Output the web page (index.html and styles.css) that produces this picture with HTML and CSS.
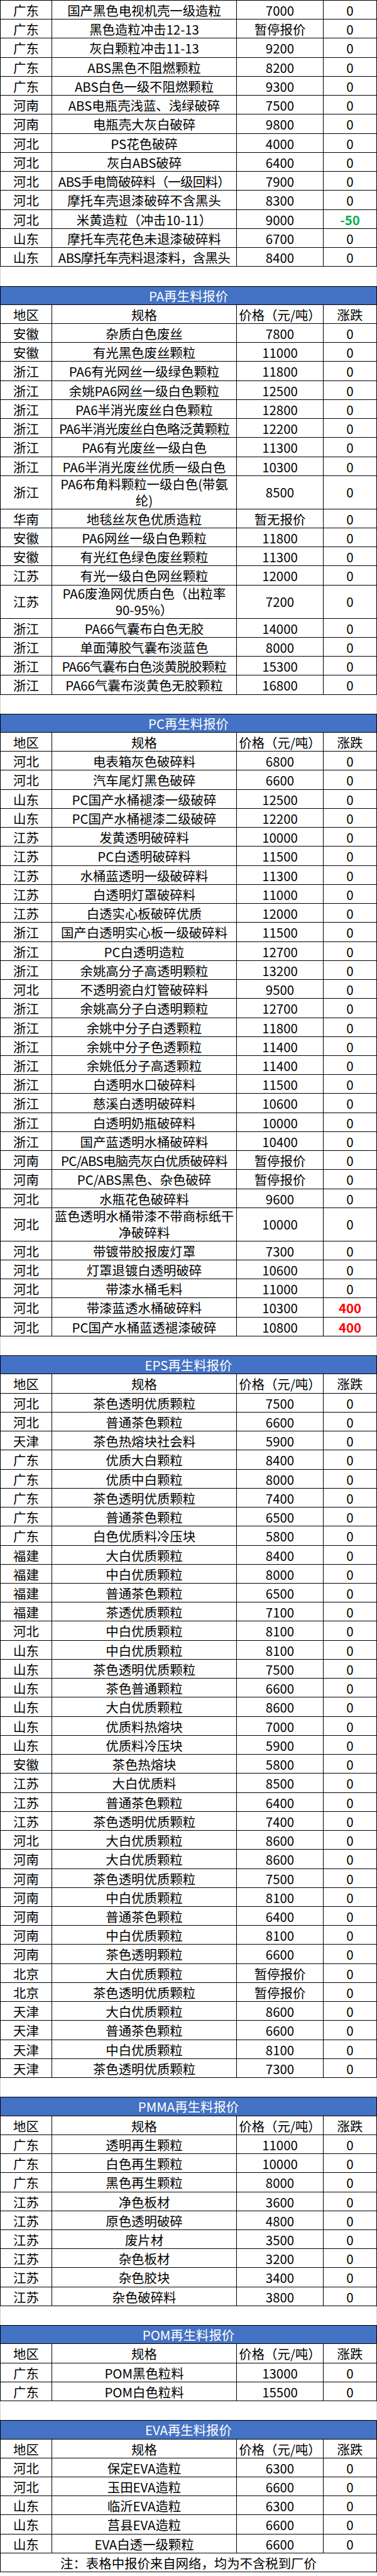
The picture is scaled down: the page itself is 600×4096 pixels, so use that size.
FILE: index.html
```html
<!DOCTYPE html>
<html lang="zh-CN">
<head>
<meta charset="utf-8">
<title>再生料报价</title>
<link rel="stylesheet" href="styles.css">
</head>
<body>
<div class="sheet">

  <section class="block first">
    <div class="row"><div class="c">广东</div><div class="c">国产黑色电视机壳一级造粒</div><div class="c">7000</div><div class="c">0</div></div>
    <div class="row"><div class="c">广东</div><div class="c">黑色造粒冲击12-13</div><div class="c">暂停报价</div><div class="c">0</div></div>
    <div class="row"><div class="c">广东</div><div class="c">灰白颗粒冲击11-13</div><div class="c">9200</div><div class="c">0</div></div>
    <div class="row"><div class="c">广东</div><div class="c">ABS黑色不阻燃颗粒</div><div class="c">8200</div><div class="c">0</div></div>
    <div class="row"><div class="c">广东</div><div class="c">ABS白色一级不阻燃颗粒</div><div class="c">9300</div><div class="c">0</div></div>
    <div class="row"><div class="c">河南</div><div class="c">ABS电瓶壳浅蓝、浅绿破碎</div><div class="c">7500</div><div class="c">0</div></div>
    <div class="row"><div class="c">河南</div><div class="c">电瓶壳大灰白破碎</div><div class="c">9800</div><div class="c">0</div></div>
    <div class="row"><div class="c">河北</div><div class="c">PS花色破碎</div><div class="c">4000</div><div class="c">0</div></div>
    <div class="row"><div class="c">河北</div><div class="c">灰白ABS破碎</div><div class="c">6400</div><div class="c">0</div></div>
    <div class="row"><div class="c">河北</div><div class="c tight">ABS手电筒破碎料（一级回料）</div><div class="c">7900</div><div class="c">0</div></div>
    <div class="row"><div class="c">河北</div><div class="c">摩托车壳退漆破碎不含黑头</div><div class="c">8300</div><div class="c">0</div></div>
    <div class="row"><div class="c">河北</div><div class="c">米黄造粒（冲击10-11）</div><div class="c">9000</div><div class="c down">-50</div></div>
    <div class="row"><div class="c">山东</div><div class="c">摩托车壳花色未退漆破碎料</div><div class="c">6700</div><div class="c">0</div></div>
    <div class="row"><div class="c">山东</div><div class="c tight">ABS摩托车壳料退漆料，含黑头</div><div class="c">8400</div><div class="c">0</div></div>
  </section>

  <div class="gap"></div>

  <section class="block">
    <div class="title">PA再生料报价</div>
    <div class="row"><div class="c">地区</div><div class="c">规格</div><div class="c">价格（元/吨）</div><div class="c">涨跌</div></div>
    <div class="row"><div class="c">安徽</div><div class="c">杂质白色废丝</div><div class="c">7800</div><div class="c">0</div></div>
    <div class="row"><div class="c">安徽</div><div class="c">有光黑色废丝颗粒</div><div class="c">11000</div><div class="c">0</div></div>
    <div class="row"><div class="c">浙江</div><div class="c">PA6有光网丝一级绿色颗粒</div><div class="c">11800</div><div class="c">0</div></div>
    <div class="row"><div class="c">浙江</div><div class="c">余姚PA6网丝一级白色颗粒</div><div class="c">12500</div><div class="c">0</div></div>
    <div class="row"><div class="c">浙江</div><div class="c">PA6半消光废丝白色颗粒</div><div class="c">12800</div><div class="c">0</div></div>
    <div class="row"><div class="c">浙江</div><div class="c tight">PA6半消光废丝白色略泛黄颗粒</div><div class="c">12200</div><div class="c">0</div></div>
    <div class="row"><div class="c">浙江</div><div class="c">PA6有光废丝一级白色</div><div class="c">11300</div><div class="c">0</div></div>
    <div class="row"><div class="c">浙江</div><div class="c">PA6半消光废丝优质一级白色</div><div class="c">10300</div><div class="c">0</div></div>
    <div class="row tall"><div class="c">浙江</div><div class="c">PA6布角料颗粒一级白色(带氨<br>纶)</div><div class="c">8500</div><div class="c">0</div></div>
    <div class="row"><div class="c">华南</div><div class="c">地毯丝灰色优质造粒</div><div class="c">暂无报价</div><div class="c">0</div></div>
    <div class="row"><div class="c">安徽</div><div class="c">PA6网丝一级白色颗粒</div><div class="c">11800</div><div class="c">0</div></div>
    <div class="row"><div class="c">安徽</div><div class="c">有光红色绿色废丝颗粒</div><div class="c">11300</div><div class="c">0</div></div>
    <div class="row"><div class="c">江苏</div><div class="c">有光一级白色网丝颗粒</div><div class="c">12000</div><div class="c">0</div></div>
    <div class="row tall"><div class="c">江苏</div><div class="c">PA6废渔网优质白色（出粒率<br>90-95%）</div><div class="c">7200</div><div class="c">0</div></div>
    <div class="row"><div class="c">浙江</div><div class="c">PA66气囊布白色无胶</div><div class="c">14000</div><div class="c">0</div></div>
    <div class="row"><div class="c">浙江</div><div class="c">单面薄胶气囊布淡蓝色</div><div class="c">8000</div><div class="c">0</div></div>
    <div class="row"><div class="c">浙江</div><div class="c tight">PA66气囊布白色淡黄脱胶颗粒</div><div class="c">15300</div><div class="c">0</div></div>
    <div class="row"><div class="c">浙江</div><div class="c">PA66气囊布淡黄色无胶颗粒</div><div class="c">16800</div><div class="c">0</div></div>
  </section>

  <div class="gap"></div>

  <section class="block">
    <div class="title">PC再生料报价</div>
    <div class="row"><div class="c">地区</div><div class="c">规格</div><div class="c">价格（元/吨）</div><div class="c">涨跌</div></div>
    <div class="row"><div class="c">河北</div><div class="c">电表箱灰色破碎料</div><div class="c">6800</div><div class="c">0</div></div>
    <div class="row"><div class="c">河北</div><div class="c">汽车尾灯黑色破碎</div><div class="c">6600</div><div class="c">0</div></div>
    <div class="row"><div class="c">山东</div><div class="c">PC国产水桶褪漆一级破碎</div><div class="c">12500</div><div class="c">0</div></div>
    <div class="row"><div class="c">山东</div><div class="c">PC国产水桶褪漆二级破碎</div><div class="c">12200</div><div class="c">0</div></div>
    <div class="row"><div class="c">江苏</div><div class="c">发黄透明破碎料</div><div class="c">10000</div><div class="c">0</div></div>
    <div class="row"><div class="c">江苏</div><div class="c">PC白透明破碎料</div><div class="c">11500</div><div class="c">0</div></div>
    <div class="row"><div class="c">江苏</div><div class="c">水桶蓝透明一级破碎料</div><div class="c">11300</div><div class="c">0</div></div>
    <div class="row"><div class="c">江苏</div><div class="c">白透明灯罩破碎料</div><div class="c">11000</div><div class="c">0</div></div>
    <div class="row"><div class="c">江苏</div><div class="c">白透实心板破碎优质</div><div class="c">12000</div><div class="c">0</div></div>
    <div class="row"><div class="c">浙江</div><div class="c">国产白透明实心板一级破碎料</div><div class="c">11500</div><div class="c">0</div></div>
    <div class="row"><div class="c">浙江</div><div class="c">PC白透明造粒</div><div class="c">12700</div><div class="c">0</div></div>
    <div class="row"><div class="c">浙江</div><div class="c">余姚高分子高透明颗粒</div><div class="c">13200</div><div class="c">0</div></div>
    <div class="row"><div class="c">河北</div><div class="c">不透明瓷白灯管破碎料</div><div class="c">9500</div><div class="c">0</div></div>
    <div class="row"><div class="c">浙江</div><div class="c">余姚高分子白透明颗粒</div><div class="c">12700</div><div class="c">0</div></div>
    <div class="row"><div class="c">浙江</div><div class="c">余姚中分子白透颗粒</div><div class="c">11800</div><div class="c">0</div></div>
    <div class="row"><div class="c">浙江</div><div class="c">余姚中分子色透颗粒</div><div class="c">11400</div><div class="c">0</div></div>
    <div class="row"><div class="c">浙江</div><div class="c">余姚低分子高透颗粒</div><div class="c">11400</div><div class="c">0</div></div>
    <div class="row"><div class="c">浙江</div><div class="c">白透明水口破碎料</div><div class="c">11500</div><div class="c">0</div></div>
    <div class="row"><div class="c">浙江</div><div class="c">慈溪白透明破碎料</div><div class="c">10600</div><div class="c">0</div></div>
    <div class="row"><div class="c">浙江</div><div class="c">白透明奶瓶破碎料</div><div class="c">10000</div><div class="c">0</div></div>
    <div class="row"><div class="c">浙江</div><div class="c">国产蓝透明水桶破碎料</div><div class="c">10400</div><div class="c">0</div></div>
    <div class="row"><div class="c">河南</div><div class="c tight">PC/ABS电脑壳灰白优质破碎料</div><div class="c">暂停报价</div><div class="c">0</div></div>
    <div class="row"><div class="c">河南</div><div class="c">PC/ABS黑色、杂色破碎</div><div class="c">暂停报价</div><div class="c">0</div></div>
    <div class="row"><div class="c">河北</div><div class="c">水瓶花色破碎料</div><div class="c">9600</div><div class="c">0</div></div>
    <div class="row tall"><div class="c">河北</div><div class="c">蓝色透明水桶带漆不带商标纸干<br>净破碎料</div><div class="c">10000</div><div class="c">0</div></div>
    <div class="row"><div class="c">河北</div><div class="c">带镀带胶报废灯罩</div><div class="c">7300</div><div class="c">0</div></div>
    <div class="row"><div class="c">河北</div><div class="c">灯罩退镀白透明破碎</div><div class="c">10600</div><div class="c">0</div></div>
    <div class="row"><div class="c">河北</div><div class="c">带漆水桶毛料</div><div class="c">11000</div><div class="c">0</div></div>
    <div class="row"><div class="c">河北</div><div class="c">带漆蓝透水桶破碎料</div><div class="c">10300</div><div class="c up">400</div></div>
    <div class="row"><div class="c">河北</div><div class="c">PC国产水桶蓝透褪漆破碎</div><div class="c">10800</div><div class="c up">400</div></div>
  </section>

  <div class="gap"></div>

  <section class="block">
    <div class="title">EPS再生料报价</div>
    <div class="row"><div class="c">地区</div><div class="c">规格</div><div class="c">价格（元/吨）</div><div class="c">涨跌</div></div>
    <div class="row"><div class="c">河北</div><div class="c">茶色透明优质颗粒</div><div class="c">7500</div><div class="c">0</div></div>
    <div class="row"><div class="c">河北</div><div class="c">普通茶色颗粒</div><div class="c">6600</div><div class="c">0</div></div>
    <div class="row"><div class="c">天津</div><div class="c">茶色热熔块社会料</div><div class="c">5900</div><div class="c">0</div></div>
    <div class="row"><div class="c">广东</div><div class="c">优质大白颗粒</div><div class="c">8400</div><div class="c">0</div></div>
    <div class="row"><div class="c">广东</div><div class="c">优质中白颗粒</div><div class="c">8000</div><div class="c">0</div></div>
    <div class="row"><div class="c">广东</div><div class="c">茶色透明优质颗粒</div><div class="c">7400</div><div class="c">0</div></div>
    <div class="row"><div class="c">广东</div><div class="c">普通茶色颗粒</div><div class="c">6500</div><div class="c">0</div></div>
    <div class="row"><div class="c">广东</div><div class="c">白色优质料冷压块</div><div class="c">5800</div><div class="c">0</div></div>
    <div class="row"><div class="c">福建</div><div class="c">大白优质颗粒</div><div class="c">8400</div><div class="c">0</div></div>
    <div class="row"><div class="c">福建</div><div class="c">中白优质颗粒</div><div class="c">8000</div><div class="c">0</div></div>
    <div class="row"><div class="c">福建</div><div class="c">普通茶色颗粒</div><div class="c">6500</div><div class="c">0</div></div>
    <div class="row"><div class="c">福建</div><div class="c">茶透优质颗粒</div><div class="c">7100</div><div class="c">0</div></div>
    <div class="row"><div class="c">河北</div><div class="c">中白优质颗粒</div><div class="c">8100</div><div class="c">0</div></div>
    <div class="row"><div class="c">山东</div><div class="c">中白优质颗粒</div><div class="c">8100</div><div class="c">0</div></div>
    <div class="row"><div class="c">山东</div><div class="c">茶色透明优质颗粒</div><div class="c">7500</div><div class="c">0</div></div>
    <div class="row"><div class="c">山东</div><div class="c">茶色普通颗粒</div><div class="c">6600</div><div class="c">0</div></div>
    <div class="row"><div class="c">山东</div><div class="c">大白优质颗粒</div><div class="c">8600</div><div class="c">0</div></div>
    <div class="row"><div class="c">山东</div><div class="c">优质料热熔块</div><div class="c">7000</div><div class="c">0</div></div>
    <div class="row"><div class="c">山东</div><div class="c">优质料冷压块</div><div class="c">5900</div><div class="c">0</div></div>
    <div class="row"><div class="c">安徽</div><div class="c">茶色热熔块</div><div class="c">5800</div><div class="c">0</div></div>
    <div class="row"><div class="c">江苏</div><div class="c">大白优质料</div><div class="c">8500</div><div class="c">0</div></div>
    <div class="row"><div class="c">江苏</div><div class="c">普通茶色颗粒</div><div class="c">6400</div><div class="c">0</div></div>
    <div class="row"><div class="c">江苏</div><div class="c">茶色透明优质颗粒</div><div class="c">7400</div><div class="c">0</div></div>
    <div class="row"><div class="c">河北</div><div class="c">大白优质颗粒</div><div class="c">8600</div><div class="c">0</div></div>
    <div class="row"><div class="c">河南</div><div class="c">大白优质颗粒</div><div class="c">8600</div><div class="c">0</div></div>
    <div class="row"><div class="c">河南</div><div class="c">茶色透明优质颗粒</div><div class="c">7500</div><div class="c">0</div></div>
    <div class="row"><div class="c">河南</div><div class="c">中白优质颗粒</div><div class="c">8100</div><div class="c">0</div></div>
    <div class="row"><div class="c">河南</div><div class="c">普通茶色颗粒</div><div class="c">6400</div><div class="c">0</div></div>
    <div class="row"><div class="c">河南</div><div class="c">中白优质颗粒</div><div class="c">8100</div><div class="c">0</div></div>
    <div class="row"><div class="c">河南</div><div class="c">茶色透明颗粒</div><div class="c">6600</div><div class="c">0</div></div>
    <div class="row"><div class="c">北京</div><div class="c">大白优质颗粒</div><div class="c">暂停报价</div><div class="c">0</div></div>
    <div class="row"><div class="c">北京</div><div class="c">茶色透明优质颗粒</div><div class="c">暂停报价</div><div class="c">0</div></div>
    <div class="row"><div class="c">天津</div><div class="c">大白优质颗粒</div><div class="c">8600</div><div class="c">0</div></div>
    <div class="row"><div class="c">天津</div><div class="c">普通茶色颗粒</div><div class="c">6600</div><div class="c">0</div></div>
    <div class="row"><div class="c">天津</div><div class="c">中白优质颗粒</div><div class="c">8100</div><div class="c">0</div></div>
    <div class="row"><div class="c">天津</div><div class="c">茶色透明优质颗粒</div><div class="c">7300</div><div class="c">0</div></div>
  </section>

  <div class="gap"></div>

  <section class="block">
    <div class="title">PMMA再生料报价</div>
    <div class="row"><div class="c">地区</div><div class="c">规格</div><div class="c">价格（元/吨）</div><div class="c">涨跌</div></div>
    <div class="row"><div class="c">广东</div><div class="c">透明再生颗粒</div><div class="c">11000</div><div class="c">0</div></div>
    <div class="row"><div class="c">广东</div><div class="c">白色再生颗粒</div><div class="c">10000</div><div class="c">0</div></div>
    <div class="row"><div class="c">广东</div><div class="c">黑色再生颗粒</div><div class="c">8000</div><div class="c">0</div></div>
    <div class="row"><div class="c">江苏</div><div class="c">净色板材</div><div class="c">3600</div><div class="c">0</div></div>
    <div class="row"><div class="c">江苏</div><div class="c">原色透明破碎</div><div class="c">4800</div><div class="c">0</div></div>
    <div class="row"><div class="c">江苏</div><div class="c">废片材</div><div class="c">3500</div><div class="c">0</div></div>
    <div class="row"><div class="c">江苏</div><div class="c">杂色板材</div><div class="c">3200</div><div class="c">0</div></div>
    <div class="row"><div class="c">江苏</div><div class="c">杂色胶块</div><div class="c">3400</div><div class="c">0</div></div>
    <div class="row"><div class="c">江苏</div><div class="c">杂色破碎料</div><div class="c">3800</div><div class="c">0</div></div>
  </section>

  <div class="gap"></div>

  <section class="block">
    <div class="title">POM再生料报价</div>
    <div class="row"><div class="c">地区</div><div class="c">规格</div><div class="c">价格（元/吨）</div><div class="c">涨跌</div></div>
    <div class="row"><div class="c">广东</div><div class="c">POM黑色粒料</div><div class="c">13000</div><div class="c">0</div></div>
    <div class="row"><div class="c">广东</div><div class="c">POM白色粒料</div><div class="c">15500</div><div class="c">0</div></div>
  </section>

  <div class="gap"></div>

  <section class="block">
    <div class="title">EVA再生料报价</div>
    <div class="row"><div class="c">地区</div><div class="c">规格</div><div class="c">价格（元/吨）</div><div class="c">涨跌</div></div>
    <div class="row"><div class="c">河北</div><div class="c">保定EVA造粒</div><div class="c">6300</div><div class="c">0</div></div>
    <div class="row"><div class="c">河北</div><div class="c">玉田EVA造粒</div><div class="c">6600</div><div class="c">0</div></div>
    <div class="row"><div class="c">山东</div><div class="c">临沂EVA造粒</div><div class="c">6300</div><div class="c">0</div></div>
    <div class="row"><div class="c">山东</div><div class="c">莒县EVA造粒</div><div class="c">6600</div><div class="c">0</div></div>
    <div class="row"><div class="c">山东</div><div class="c">EVA白透一级颗粒</div><div class="c">6600</div><div class="c">0</div></div>
    <div class="note">注：表格中报价来自网络，均为不含税到厂价</div>
  </section>

</div>
</body>
</html>
```

FILE: styles.css
```css
html, body {
  margin: 0;
  padding: 0;
  background: #ffffff;
}

body {
  font-family: "Noto Sans CJK SC", "Noto Sans", sans-serif;
  font-size: 20.4px;
  color: #000000;
}

.sheet {
  width: 600px;
}

.block {
  display: flex;
  flex-direction: column;
}

.block.first {
  border-top: 1px solid #000000;
}

.row {
  display: grid;
  grid-template-columns: 82px 294px 138px 1fr;
  height: 30.24px;
  box-sizing: border-box;
  border-left: 1px solid #000000;
  border-right: 1px solid #000000;
  border-bottom: 1px solid #000000;
}

.row.tall {
  height: 52.92px;
  line-height: 25.7px;
}

.c {
  display: flex;
  align-items: center;
  justify-content: center;
  text-align: center;
  white-space: nowrap;
  min-width: 0;
  border-right: 1px solid #000000;
}

.c:last-child {
  border-right: none;
}

.tight {
  letter-spacing: -0.6px;
}

.down {
  color: #00b050;
  font-weight: 700;
}

.up {
  color: #ff0000;
  font-weight: 700;
}

.title {
  height: 30.24px;
  box-sizing: border-box;
  border: 1px solid #000000;
  background: #4472c4;
  color: #ffffff;
  display: flex;
  align-items: center;
  justify-content: center;
}

.gap {
  height: 30.24px;
  box-sizing: border-box;
  border-left: 1px solid #d0d0d0;
  border-right: 1px solid #d0d0d0;
}

.note {
  height: 30.24px;
  box-sizing: border-box;
  border-left: 1px solid #000000;
  border-right: 1px solid #000000;
  border-bottom: 1px solid #000000;
  display: flex;
  align-items: center;
  justify-content: center;
  white-space: nowrap;
}
```
